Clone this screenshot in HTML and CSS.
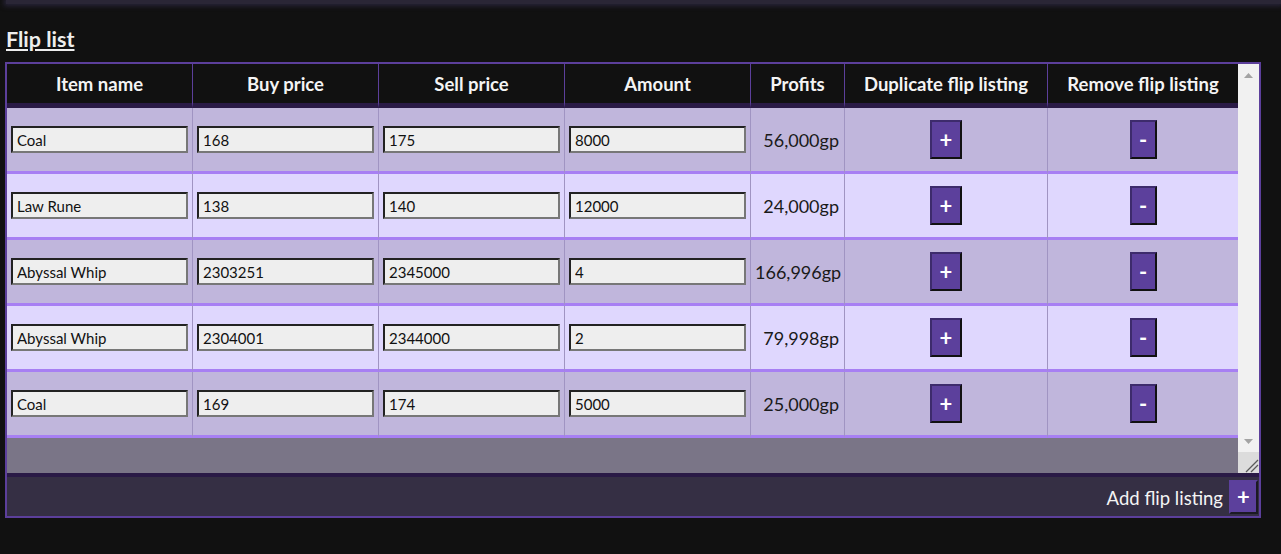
FILE: index.html
```html
<!DOCTYPE html>
<html>
<head>
<meta charset="utf-8">
<link rel="stylesheet" href="styles.css">
</head>
<body>
<div class="topbar"></div>
<main class="page">
  <h2 class="title">Flip list</h2>
  <section class="flipbox">
    <div class="scrollarea">
      <div class="viewport">
        <table class="fliptable">
          <colgroup>
            <col class="c-input"><col class="c-input"><col class="c-input"><col class="c-input">
            <col class="c-profit"><col class="c-dup"><col class="c-rem">
          </colgroup>
          <thead>
            <tr>
              <th>Item name</th><th>Buy price</th><th>Sell price</th><th>Amount</th><th>Profits</th><th>Duplicate flip listing</th><th>Remove flip listing</th>
            </tr>
          </thead>
          <tbody>
            <tr class="odd">
              <td><input class="field" value="Coal"></td><td><input class="field" value="168"></td><td><input class="field" value="175"></td><td><input class="field" value="8000"></td>
              <td class="profit">56,000gp</td><td class="act"><button class="btn btn-dup">+</button></td><td class="act"><button class="btn btn-rem">-</button></td>
            </tr>
            <tr class="even">
              <td><input class="field" value="Law Rune"></td><td><input class="field" value="138"></td><td><input class="field" value="140"></td><td><input class="field" value="12000"></td>
              <td class="profit">24,000gp</td><td class="act"><button class="btn btn-dup">+</button></td><td class="act"><button class="btn btn-rem">-</button></td>
            </tr>
            <tr class="odd">
              <td><input class="field" value="Abyssal Whip"></td><td><input class="field" value="2303251"></td><td><input class="field" value="2345000"></td><td><input class="field" value="4"></td>
              <td class="profit">166,996gp</td><td class="act"><button class="btn btn-dup">+</button></td><td class="act"><button class="btn btn-rem">-</button></td>
            </tr>
            <tr class="even">
              <td><input class="field" value="Abyssal Whip"></td><td><input class="field" value="2304001"></td><td><input class="field" value="2344000"></td><td><input class="field" value="2"></td>
              <td class="profit">79,998gp</td><td class="act"><button class="btn btn-dup">+</button></td><td class="act"><button class="btn btn-rem">-</button></td>
            </tr>
            <tr class="odd">
              <td><input class="field" value="Coal"></td><td><input class="field" value="169"></td><td><input class="field" value="174"></td><td><input class="field" value="5000"></td>
              <td class="profit">25,000gp</td><td class="act"><button class="btn btn-dup">+</button></td><td class="act"><button class="btn btn-rem">-</button></td>
            </tr>
          </tbody>
        </table>
      </div>
      <div class="vscroll" aria-hidden="true">
        <div class="sb-btn">
          <svg width="9" height="5" viewBox="0 0 9 5"><polygon points="4.5,0 9,5 0,5" fill="#a3a3a3"/></svg>
        </div>
        <div class="sb-track"></div>
        <div class="sb-btn">
          <svg width="9" height="5" viewBox="0 0 9 5"><polygon points="0,0 9,0 4.5,5" fill="#a3a3a3"/></svg>
        </div>
        <div class="sb-corner">
          <svg width="21" height="21" viewBox="0 0 21 21"><path d="M8 20 L20 8 M13 20 L20 13" stroke="#5a5a5a" stroke-width="1.3"/></svg>
        </div>
      </div>
    </div>
    <footer class="flipfoot">
      <span class="add-label">Add flip listing</span>
      <button class="btn btn-add">+</button>
    </footer>
  </section>
</main>
</body>
</html>
```

FILE: styles.css
```css
html, body {
  margin: 0;
  padding: 0;
  background: #111111;
  font-family: Lato, "Open Sans", sans-serif;
}

.topbar {
  height: 4px;
  margin: 0 0 0 6px;
  background: #2a2636;
  box-shadow: 0 0 5px 2px #28243a;
}

.page {
  padding: 0 5px;
}

.title {
  margin: 21px 0 0 1px;
  height: 37px;
  font-size: 21.5px;
  font-weight: 700;
  line-height: 28px;
  color: #eeeeee;
  text-decoration: underline;
  text-decoration-thickness: 2px;
  text-underline-offset: 2px;
}

.flipbox {
  width: 1252px;
  border: 2px solid #5c3f9b;
  background: #352f44;
}

.scrollarea {
  display: flex;
  height: 409px;
}

.viewport {
  flex: 1;
  overflow: hidden;
  background: #7a7587;
}

.vscroll {
  width: 21px;
  display: flex;
  flex-direction: column;
  background: #f1f1f1;
}

.sb-btn {
  height: 22px;
  display: flex;
  align-items: center;
  justify-content: center;
}

.sb-btn svg, .sb-corner svg {
  display: block;
}

.sb-track {
  flex: 1;
}

.sb-corner {
  height: 21px;
  background: #dcdcdc;
}

.fliptable {
  width: 1231px;
  table-layout: fixed;
  border-collapse: separate;
  border-spacing: 0;
}

.c-input { width: 186px; }
.c-profit { width: 94px; }
.c-dup { width: 203px; }
.c-rem { width: 190px; }

.fliptable th {
  height: 44px;
  padding: 0;
  box-sizing: border-box;
  background: #111111;
  color: #f4f4f4;
  font-size: 18.5px;
  font-weight: 700;
  text-align: center;
  white-space: nowrap;
  border-right: 1px solid #5c3f9b;
  border-bottom: 5px solid #2a1a46;
}

.fliptable th:last-child {
  border-right: none;
}

.fliptable td {
  padding: 12px 4px;
  border-right: 1px solid #a094c2;
  border-bottom: 3px solid #a77ff3;
  vertical-align: middle;
  height: 39px;
}

.fliptable td:last-child {
  border-right: none;
}

.odd td { background: #c0b6dc; }
.even td { background: #dfd7fe; }

.field {
  display: block;
  box-sizing: border-box;
  width: 100%;
  height: 27px;
  margin: 0;
  padding: 0 4px;
  border: 2px solid;
  border-color: #222222 #777777 #777777 #222222;
  background: #eeeeee;
  color: #111111;
  font-family: Lato, "Open Sans", sans-serif;
  font-size: 15px;
  outline: none;
}

.profit {
  text-align: right;
  font-size: 18px;
  color: #1a1a1a;
  white-space: nowrap;
}

.fliptable td.profit {
  padding-right: 5px;
}

.act {
  text-align: center;
}

.btn {
  box-sizing: border-box;
  margin: 0;
  padding: 0;
  border: 2px solid;
  border-color: #3d2b6c #111111 #111111 #3d2b6c;
  background: #5c409c;
  color: #ffffff;
  font-family: Lato, "Open Sans", sans-serif;
  font-weight: 700;
  font-size: 22px;
  line-height: 1;
  vertical-align: middle;
}

.btn-dup {
  width: 32px;
  height: 39px;
}

.btn-rem {
  width: 27px;
  height: 39px;
}

.flipfoot {
  display: flex;
  justify-content: flex-end;
  align-items: center;
  gap: 6px;
  height: 39px;
  padding: 0 1px 0 0;
  border-top: 4px solid #2a1a46;
  background: #352f44;
}

.add-label {
  color: #f4f4f4;
  font-size: 18.5px;
  padding-top: 3px;
}

.btn-add {
  width: 29px;
  height: 34px;
  border-color: #5c409c #1c1a24 #1c1a24 #5c409c;
}
```
